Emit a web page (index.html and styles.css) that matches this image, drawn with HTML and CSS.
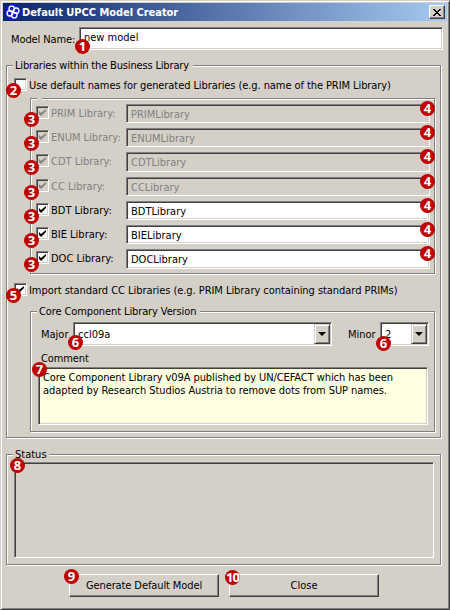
FILE: index.html
```html
<!DOCTYPE html>
<html lang="en">
<head>
<meta charset="utf-8">
<title>Default UPCC Model Creator</title>
<link rel="stylesheet" href="styles.css">
</head>
<body>
<main class="window">
  <header class="titlebar">
    <svg class="logo" viewBox="0 0 16 16"><circle cx="8" cy="8" r="7.9" fill="#1616e4"/><g fill="none" stroke="#fff" stroke-width="1.3"><circle cx="6.7" cy="4.8" r="2.7"/><circle cx="11.2" cy="6.7" r="2.7"/><circle cx="9.3" cy="11.2" r="2.7"/><circle cx="4.8" cy="9.3" r="2.7"/></g></svg>
    <h1><span class="t title-text">Default UPCC Model Creator</span></h1>
    <button class="close" aria-label="Close window"><svg viewBox="0 0 8 7" width="8" height="7" shape-rendering="crispEdges"><path d="M0 0h2v1h1v1h2v-1h1v-1h2v1h-1v1h-1v1h-1v1h1v1h1v1h1v1h-2v-1h-1v-1h-2v1h-1v1h-2v-1h1v-1h1v-1h1v-1h-1v-1h-1v-1h-1z"/></svg></button>
  </header>

  <div class="name-row">
    <label class="t w-name">Model Name:</label>
    <div class="field name-field"><span class="t w-new">new model</span><b class="badge b1">1</b></div>
  </div>

  <section class="group libraries">
    <h2 class="legend"><span class="t w-libs">Libraries within the Business Library</span></h2>
    <div class="option">
      <i class="check"></i><span class="t w-use">Use default names for generated Libraries (e.g. name of the PRIM Library)</span><b class="badge b2">2</b>
    </div>
    <div class="group names">
      <h2 class="legend blank"></h2>
      <div class="row off"><i class="check"><svg viewBox="0 0 7 7"><path d="M0 2v3l2 2 5-5V0L2 4z"/></svg></i><span class="t">PRIM Library:</span><div class="field"><span class="t">PRIMLibrary</span></div><b class="badge b3">3</b><b class="badge b4">4</b></div>
      <div class="row off"><i class="check"><svg viewBox="0 0 7 7"><path d="M0 2v3l2 2 5-5V0L2 4z"/></svg></i><span class="t">ENUM Library:</span><div class="field"><span class="t">ENUMLibrary</span></div><b class="badge b3">3</b><b class="badge b4">4</b></div>
      <div class="row off"><i class="check"><svg viewBox="0 0 7 7"><path d="M0 2v3l2 2 5-5V0L2 4z"/></svg></i><span class="t">CDT Library:</span><div class="field"><span class="t">CDTLibrary</span></div><b class="badge b3">3</b><b class="badge b4">4</b></div>
      <div class="row off"><i class="check"><svg viewBox="0 0 7 7"><path d="M0 2v3l2 2 5-5V0L2 4z"/></svg></i><span class="t">CC Library:</span><div class="field"><span class="t">CCLibrary</span></div><b class="badge b3">3</b><b class="badge b4">4</b></div>
      <div class="row"><i class="check"><svg viewBox="0 0 7 7"><path d="M0 2v3l2 2 5-5V0L2 4z"/></svg></i><span class="t">BDT Library:</span><div class="field"><span class="t">BDTLibrary</span></div><b class="badge b3">3</b><b class="badge b4">4</b></div>
      <div class="row"><i class="check"><svg viewBox="0 0 7 7"><path d="M0 2v3l2 2 5-5V0L2 4z"/></svg></i><span class="t">BIE Library:</span><div class="field"><span class="t">BIELibrary</span></div><b class="badge b3">3</b><b class="badge b4">4</b></div>
      <div class="row"><i class="check"><svg viewBox="0 0 7 7"><path d="M0 2v3l2 2 5-5V0L2 4z"/></svg></i><span class="t">DOC Library:</span><div class="field"><span class="t">DOCLibrary</span></div><b class="badge b3">3</b><b class="badge b4">4</b></div>
    </div>
    <div class="option import">
      <i class="check"><svg viewBox="0 0 7 7"><path d="M0 2v3l2 2 5-5V0L2 4z"/></svg></i><span class="t w-import">Import standard CC Libraries (e.g. PRIM Library containing standard PRIMs)</span><b class="badge b2">5</b>
    </div>
    <div class="group version">
      <h2 class="legend"><span class="t w-ver">Core Component Library Version</span></h2>
      <div class="selects">
        <label class="t w-major">Major</label>
        <div class="field combo major"><span class="t">ccl09a</span><button class="arrow" aria-label="Open"></button><b class="badge b6">6</b></div>
        <label class="t w-minor">Minor</label>
        <div class="field combo minor"><span class="t">2</span><button class="arrow" aria-label="Open"></button><b class="badge b6 second">6</b></div>
      </div>
      <div class="comment-label"><label class="t w-comment">Comment</label></div>
      <div class="field comment"><p><span class="t w-c1">Core Component Library v09A published by UN/CEFACT which has been</span></p><p><span class="t w-c2">adapted by Research Studios Austria to remove dots from SUP names.</span></p><b class="badge b7">7</b></div>
    </div>
  </section>

  <section class="group status">
    <h2 class="legend"><span class="t w-status">Status</span></h2>
    <div class="field output"><b class="badge b8">8</b></div>
  </section>

  <footer class="actions">
    <button class="push"><span class="t w-gen">Generate Default Model</span><b class="badge b9">9</b></button>
    <button class="push"><span class="t w-close">Close</span><b class="badge b10">10</b></button>
  </footer>
</main>
</body>
</html>
```
FILE: styles.css
```css
* { box-sizing: border-box; }
body { margin: 0; }
.window {
  width: 450px; height: 610px; padding: 2px 1px 0 2px;
  background: #d4d0c8; color: #000;
  border: 1px solid; border-color: #d4d0c8 #404040 #404040 #d4d0c8;
  box-shadow: inset 1px 1px #fff, inset -1px -1px #808080;
  font: 11px/13px "DejaVu Sans Condensed", "DejaVu Sans", sans-serif;
  font-stretch: condensed;
}
.t { white-space: nowrap; }
h1, h2, p { margin: 0; font: inherit; }
button { font: inherit; color: inherit; padding: 0; margin: 0; }

.titlebar {
  display: flex; align-items: center; height: 18px; margin: 0 1px 0 0;
  padding: 0 2px; color: #fff; font-weight: bold;
  background: linear-gradient(90deg, #0a246a, #a6caf0);
}
.logo { width: 16px; height: 16px; margin-right: 1px; }
.titlebar h1 { flex: 1; }
.close {
  display: grid; place-items: center; width: 16px; height: 14px;
  background: #d4d0c8; border: 1px solid; border-color: #fff #404040 #404040 #fff;
  box-shadow: inset -1px -1px #808080;
}

.field {
  position: relative; background: #fff;
  border: 1px solid; border-color: #808080 #fff #fff #808080;
  box-shadow: inset 1px 1px #404040, inset -1px -1px #d4d0c8;
}
.name-row { display: flex; margin: 6px 5px 0 8px; }
.name-row label { width: 68px; padding-top: 6px; }
.name-field { flex: 1; height: 23px; padding: 3px 0 0 4px; }

.group {
  position: relative; border: 1px solid #808080;
  box-shadow: 1px 1px #fff, inset 1px 1px #fff;
}
.legend {
  position: absolute; top: -8px; left: 6px; height: 14px; padding: 0 2px;
  background: #d4d0c8; line-height: 15px;
}
.libraries { width: 435px; height: 373px; margin: 15px 0 0 3px; padding: 12px 0 0 7px; }
.libraries > .legend { width: 180px; }
.option { position: relative; display: flex; align-items: center; height: 13px; gap: 2px; }
.option > .t { padding-top: 1px; }
.check {
  display: grid; place-items: center; flex: none; width: 13px; height: 13px; background: #fff;
  border: 1px solid; border-color: #808080 #fff #fff #808080;
  box-shadow: inset 1px 1px #404040, inset -1px -1px #d4d0c8;
}
.check svg { width: 7px; height: 7px; }

.names {
  display: grid; grid-template-rows: 19px 19px 20px 19px 19px 19px 20px; row-gap: 5px;
  width: 405px; height: 176px; margin: 7px 0 0 16px; padding: 5px 5px 0;
}
.names > .blank { width: 5px; padding: 0; }
.row { position: relative; display: grid; grid-template-columns: 15px 75px 304px; }
.row .check { margin-top: 2px; }
.row > .t { padding-top: 3px; }
.row .field { padding: 3px 0 0 4px; }
.off { color: #808080; fill: #808080; }
.off .check, .off .field { background: #d4d0c8; }
.off .field { box-shadow: inset 1px 1px #404040; }

.import { margin-top: 9px; }
.version { width: 405px; height: 121px; margin: 15px 0 0 16px; padding: 10px 5px 0 7px; }
.version > .legend { width: 163px; }
.selects { display: flex; height: 24px; }
.selects > * { flex: none; }
.selects label { padding: 6px 0 0 3px; width: 35px; }
.selects .w-minor { width: 48px; padding-left: 16px; }
.combo { display: flex; justify-content: space-between; padding: 1px 1px 1px 4px; }
.combo > .t { padding-top: 4px; }
.major { width: 259px; }
.minor { width: 49px; }
.arrow {
  display: grid; place-items: center; width: 16px; height: 20px;
  background: #d4d0c8; border: 1px solid; border-color: #d4d0c8 #404040 #404040 #d4d0c8;
  box-shadow: inset 1px 1px #fff, inset -1px -1px #808080;
}
.arrow::before { content: ""; border: solid transparent; border-width: 4px 4px 0; border-top-color: #000; }
.comment-label { height: 21px; padding: 6px 0 0 3px; }
.comment { width: 390px; height: 58px; padding: 3px 0 0 4px; background: #ffffe1; }

.status { width: 435px; height: 111px; margin: 16px 0 0 3px; padding: 7px; }
.status > .legend { width: 36px; }
.output { width: 420px; height: 96px; background: #d4d0c8; box-shadow: inset 1px 1px #404040; }
.actions { display: flex; gap: 10px; margin: 9px 0 0 66px; }
.push {
  position: relative; width: 150px; height: 23px; background: #d4d0c8;
  border: 1px solid; border-color: #fff #404040 #404040 #fff; box-shadow: inset -1px -1px #808080;
}

.title-text { letter-spacing: -.03px; }
.w-libs { letter-spacing: -.16px; }
.w-use { letter-spacing: -.08px; }
.w-import { letter-spacing: -.05px; }
.w-ver { letter-spacing: -.11px; }
.w-name, .w-comment { letter-spacing: -.1px; }
.w-gen { letter-spacing: -.1px; }
.w-c1 { letter-spacing: -.08px; }
.w-c2 { letter-spacing: -.08px; }

.badge {
  position: absolute; width: 15px; height: 15px; border-radius: 50%;
  background: #c00000; color: #fff; text-align: center;
  font: bold 13px/15px "Open Sans", sans-serif; letter-spacing: 0; z-index: 2;
}
.b1 { left: -5px; top: 11px; }
.b2 { left: -8px; top: 5px; }
.b3 { left: -12px; top: 8px; }
.b4 { left: 384px; top: -3px; }
.b6 { left: -6px; top: 12px; }
.second { left: -5px; top: 13px; }
.b7 { left: -7px; top: -6px; }
.b8 { left: -5px; top: -5px; }
.b9 { left: -6px; top: -6px; }
.b10 { left: -5px; top: -5px; letter-spacing: -1px; }
```
